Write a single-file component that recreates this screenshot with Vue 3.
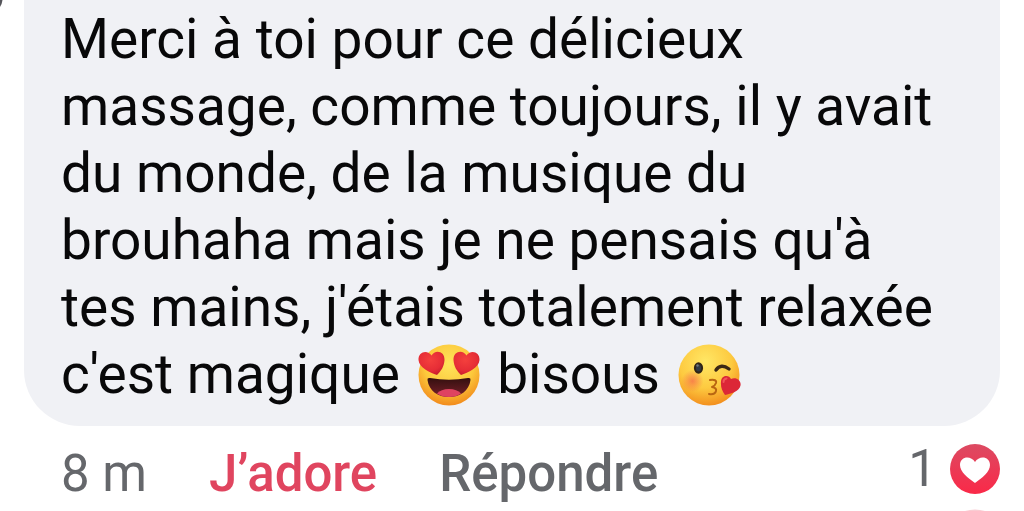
<script setup>
const lines = [
  'Merci à toi pour ce délicieux',
  'massage, comme toujours, il y avait',
  'du monde, de la musique du',
  "brouhaha mais je ne pensais qu'à",
  "tes mains, j'étais totalement relaxée",
]
</script>

<template>
  <main class="thread">
    <svg class="avatar" viewBox="0 0 8 20" aria-hidden="true">
      <path d="M0 0H2.500Q2 4 0 7Z" fill="#55555a" />
    </svg>
    <article class="comment">
      <div class="bubble">
        <p class="message">
          <template v-for="line in lines" :key="line">{{ line }}<br /></template>c'est magique
          <svg class="emoji" viewBox="0 0 64 64" role="img" aria-label="Visage aux yeux en cœur">
            <defs>
              <radialGradient id="face" cx="50%" cy="32%" r="68%">
                <stop offset="0" stop-color="#ffe45b" />
                <stop offset=".6" stop-color="#fcc93c" />
                <stop offset="1" stop-color="#f28b1c" />
              </radialGradient>
              <linearGradient id="mouth" x1="0" y1="0" x2="0" y2="1">
                <stop offset="0" stop-color="#34100f" />
                <stop offset="1" stop-color="#761f29" />
              </linearGradient>
              <radialGradient id="eye" cx="45%" cy="35%" r="70%">
                <stop offset="0" stop-color="#f4403d" />
                <stop offset=".65" stop-color="#e62d36" />
                <stop offset="1" stop-color="#c31c2c" />
              </radialGradient>
            </defs>
            <circle cx="32" cy="32" r="30.5" fill="url(#face)" />
            <path d="M10.500 37Q10 34.500 13 35Q32 38.500 51 35Q54 34.500 53.500 37C52 48 43 54 32 54S12 48 10.500 37Z" fill="url(#mouth)" />
            <path d="M20 50.500Q24 46 32 46T44 50.500Q39 54 32 54T20 50.500Z" fill="#df4361" />
            <path d="M20 32C13 29.500 2 25 1.500 17C1 8 11 6.500 14.500 12.500C18 6 28 8 27.500 17C27 24 24 28 20 32Z" fill="url(#eye)" />
            <path d="M44 32C40 28 37 24 36.500 17C36 8 46 6 49.500 12.500C53 6.500 63 8 62.500 17C62 25 51 29.500 44 32Z" fill="url(#eye)" />
          </svg>
          bisous
          <svg class="emoji" viewBox="0 0 64 64" role="img" aria-label="Visage envoyant un bisou">
            <defs>
              <radialGradient id="kiss-face" cx="44%" cy="28%" r="72%">
                <stop offset="0" stop-color="#ffe765" />
                <stop offset=".6" stop-color="#fdca40" />
                <stop offset="1" stop-color="#f3901e" />
              </radialGradient>
              <radialGradient id="blush">
                <stop offset="0" stop-color="#f5644b" stop-opacity=".7" />
                <stop offset="1" stop-color="#f5644b" stop-opacity="0" />
              </radialGradient>
            </defs>
            <circle cx="32" cy="32" r="30.5" fill="url(#kiss-face)" />
            <circle cx="15.500" cy="38" r="11" fill="url(#blush)" />
            <ellipse cx="21.500" cy="25" rx="4.600" ry="5.700" fill="#302416" />
            <ellipse cx="21.500" cy="25" rx="2.600" ry="3.600" fill="#303944" />
            <circle cx="20.500" cy="22.500" r="1.200" fill="#70777d" />
            <path d="M39 27Q44 20 52 26" fill="none" stroke="#3b2815" stroke-width="3.400" stroke-linecap="round" />
            <path d="M33 37Q40 36 39 40Q38 43 35 44Q40 45 39 48Q38 52 32 51" fill="none" stroke="#b96612" stroke-width="2" stroke-linecap="round" stroke-linejoin="round" />
            <path d="M48 52C45 48 43.500 44 44 38.500C44.500 32 52 31.500 54 36C59 33.500 64.500 37.500 63.500 42.500C62.500 48 54 51 48 52Z" fill="#dc2737" />
            <path d="M46.500 39Q46.500 36 49.500 35.500" fill="none" stroke="#f25658" stroke-width="2" stroke-linecap="round" />
          </svg>
        </p>
      </div>
      <footer class="actions">
        <time class="time">8 m</time>
        <button class="action love" type="button">J’adore</button>
        <button class="action" type="button">Répondre</button>
        <span class="reactions">
          <span class="count">1</span>
          <svg class="badge" viewBox="0 0 50 50" role="img" aria-label="J’adore">
            <defs>
              <linearGradient id="badge-fill" x1="0" y1="0" x2="0" y2="1">
                <stop offset="0" stop-color="#dc4a62" />
                <stop offset="1" stop-color="#fa2948" />
              </linearGradient>
            </defs>
            <circle cx="25" cy="25" r="25" fill="url(#badge-fill)" />
            <path d="M25 39C18 34 10 28 10 21C10 12 21 11 25 18C29 11 40 12 40 21C40 28 32 34 25 39Z" fill="#fff" />
          </svg>
        </span>
      </footer>
    </article>
    <svg class="next-badge" viewBox="0 0 50 2" aria-hidden="true">
      <path d="M15 2Q25 -1 35 2Z" fill="#f9cdd3" />
    </svg>
  </main>
</template>

<style>
body {
  background: #fff;
}
</style>

<style scoped>
.thread {
  position: relative;
  min-height: 100vh;
  font-family: Roboto, "Liberation Sans", sans-serif;
}
.avatar {
  position: absolute;
  top: 0;
  left: 0;
  width: 8px;
  height: 20px;
}
.comment {
  margin: 0 24px;
}
.bubble {
  padding: 6px 0 18px 37px;
  border-radius: 0 0 56px 56px;
  background: #f0f1f5;
}
.message {
  margin: 0;
  color: #080809;
  font-size: 55px;
  line-height: 67px;
}
.emoji {
  width: 64px;
  height: 64px;
  margin: -14px 3px;
  vertical-align: baseline;
}
.actions {
  display: flex;
  align-items: center;
  padding: 18px 0 0 37px;
  color: #65676b;
  font-size: 51px;
  line-height: 60px;
}
.action {
  margin: 0 0 0 62px;
  padding: 0;
  border: 0;
  background: none;
  color: inherit;
  font: inherit;
  font-weight: 500;
  cursor: pointer;
}
.love {
  color: #e0455f;
}
.reactions {
  display: flex;
  align-items: center;
  gap: 13px;
  margin-left: auto;
  margin-top: -10px;
}
.badge {
  width: 50px;
  height: 50px;
}
.next-badge {
  position: absolute;
  bottom: 0;
  right: 24px;
  width: 50px;
  height: 2px;
}
</style>
